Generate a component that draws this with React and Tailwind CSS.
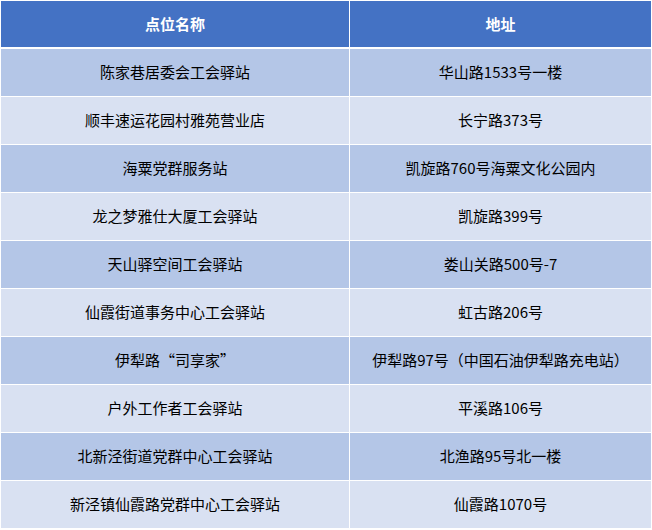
const rows = [
  ['陈家巷居委会工会驿站', '华山路1533号一楼'],
  ['顺丰速运花园村雅苑营业店', '长宁路373号'],
  ['海粟党群服务站', '凯旋路760号海粟文化公园内'],
  ['龙之梦雅仕大厦工会驿站', '凯旋路399号'],
  ['天山驿空间工会驿站', '娄山关路500号-7'],
  ['仙霞街道事务中心工会驿站', '虹古路206号'],
  ['伊犁路“司享家”', '伊犁路97号（中国石油伊犁路充电站）'],
  ['户外工作者工会驿站', '平溪路106号'],
  ['北新泾街道党群中心工会驿站', '北渔路95号北一楼'],
  ['新泾镇仙霞路党群中心工会驿站', '仙霞路1070号'],
];

export default function App() {
  return (
    <div
      className="w-[652px] h-[530px] bg-white p-[1px] overflow-hidden"
      style={{ fontFamily: '"Noto Sans CJK SC", "Noto Sans", sans-serif' }}
    >
      <div className="grid grid-cols-[348px_1fr] gap-x-[1px] mb-[2px]">
        <div className="h-[46px] bg-[#4472c4] text-white font-bold text-[15px] flex items-center justify-center">
          点位名称
        </div>
        <div className="h-[46px] bg-[#4472c4] text-white font-bold text-[15px] flex items-center justify-center">
          地址
        </div>
      </div>
      <div className="flex flex-col gap-y-[1px]">
        {rows.map(([name, addr], i) => (
          <div
            key={i}
            className={`grid grid-cols-[348px_1fr] gap-x-[1px] ${i % 2 === 0 ? '' : ''}`}
          >
            <div
              className={`h-[47px] flex items-center justify-center text-[15px] text-black ${
                i % 2 === 0 ? 'bg-[#b4c6e7]' : 'bg-[#d9e1f2]'
              }`}
            >
              {name}
            </div>
            <div
              className={`h-[47px] flex items-center justify-center text-[15px] text-black ${
                i % 2 === 0 ? 'bg-[#b4c6e7]' : 'bg-[#d9e1f2]'
              }`}
            >
              {addr}
            </div>
          </div>
        ))}
      </div>
    </div>
  );
}
